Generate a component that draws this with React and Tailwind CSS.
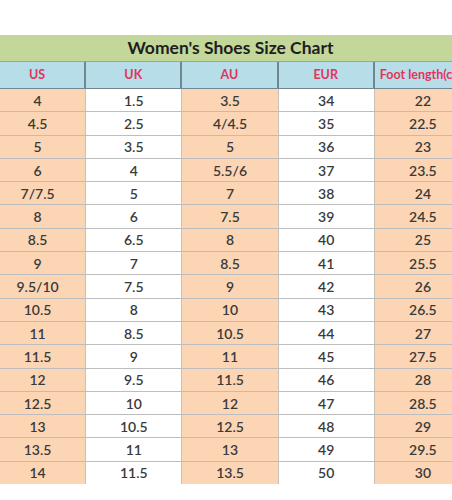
import React from "react";

const rows = [
  ["4", "1.5", "3.5", "34", "22"],
  ["4.5", "2.5", "4/4.5", "35", "22.5"],
  ["5", "3.5", "5", "36", "23"],
  ["6", "4", "5.5/6", "37", "23.5"],
  ["7/7.5", "5", "7", "38", "24"],
  ["8", "6", "7.5", "39", "24.5"],
  ["8.5", "6.5", "8", "40", "25"],
  ["9", "7", "8.5", "41", "25.5"],
  ["9.5/10", "7.5", "9", "42", "26"],
  ["10.5", "8", "10", "43", "26.5"],
  ["11", "8.5", "10.5", "44", "27"],
  ["11.5", "9", "11", "45", "27.5"],
  ["12", "9.5", "11.5", "46", "28"],
  ["12.5", "10", "12", "47", "28.5"],
  ["13", "10.5", "12.5", "48", "29"],
  ["13.5", "11", "13", "49", "29.5"],
  ["14", "11.5", "13.5", "50", "30"],
];

const heads = ["US", "UK", "AU", "EUR", "Foot length(cm)"];

export default function App() {
  return (
    <div
      className="w-[452px] h-[500px] overflow-hidden bg-white"
      style={{ fontFamily: "Lato, 'Open Sans', sans-serif" }}
    >
      <div className="h-[35px]" />
      <div className="-ml-[10px] w-[481px]">
        <div className="h-[27px] bg-[#c4d79b] border-b border-[#9aa88a] flex items-center justify-center text-[17.5px] font-bold text-[#1e1e1e]">
          Women's Shoes Size Chart
        </div>
        <div className="h-[27px] bg-[#b7dde8] grid grid-cols-5 border-b border-[#6e8792]">
          {heads.map((h, i) => (
            <div
              key={h}
              className={`flex items-center justify-center text-[12.5px] font-bold text-[#e3355a] whitespace-nowrap ${
                i < 4 ? "border-r-2 border-[#6e8792]" : ""
              }`}
            >
              {h}
            </div>
          ))}
        </div>
        <div className="h-[395px] flex flex-col">
          {rows.map((r, ri) => (
            <div
              key={ri}
              className={`flex-1 grid grid-cols-5 ${
                ri < rows.length - 1 ? "border-b border-[#bdbdbd]" : ""
              }`}
            >
              {r.map((c, ci) => (
                <div
                  key={ci}
                  className={`flex items-center justify-center text-[14px] font-semibold text-[#3a3a3a] ${
                    ci % 2 === 0 ? "bg-[#fcd5b4]" : "bg-white"
                  } ${ci < 4 ? "border-r border-[#c9c1b8]" : ""}`}
                >
                  {c}
                </div>
              ))}
            </div>
          ))}
        </div>
      </div>
    </div>
  );
}
